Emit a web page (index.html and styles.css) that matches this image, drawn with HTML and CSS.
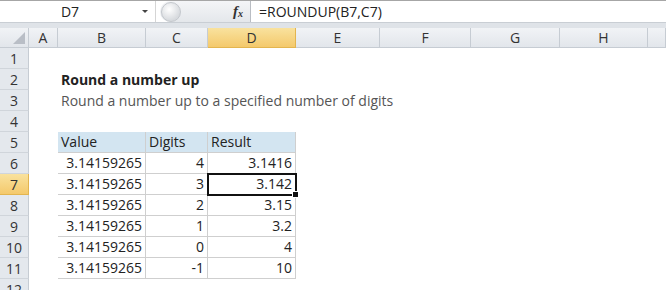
FILE: index.html
```html
<!DOCTYPE html>
<html lang="en">
<head>
    <meta charset="UTF-8">
    <title>ROUNDUP example</title>
    <link rel="stylesheet" href="styles.css">
</head>
<body>
    <div class="formula-bar">
        <div class="name-box">
            <span class="ref">D7</span>
            <span class="arrow"></span>
        </div>
        <div class="fx-area">
            <span class="knob"></span>
            <span class="fx">f<sub>x</sub></span>
        </div>
        <div class="formula">=ROUNDUP(B7,C7)</div>
    </div>
    <div class="band"></div>

    <div class="sheet">
        <div class="corner"><span class="tri"></span></div>
        <div class="col-head">A</div>
        <div class="col-head">B</div>
        <div class="col-head">C</div>
        <div class="col-head active">D</div>
        <div class="col-head">E</div>
        <div class="col-head">F</div>
        <div class="col-head">G</div>
        <div class="col-head">H</div>
        <div class="col-head"></div>

        <div class="row-head">1</div><div class="row-fill"></div>

        <div class="row-head">2</div>
        <div class="cell"></div>
        <div class="cell title span">Round a number up</div>

        <div class="row-head">3</div>
        <div class="cell"></div>
        <div class="cell sub span">Round a number up to a specified number of digits</div>

        <div class="row-head">4</div><div class="row-fill"></div>

        <div class="row-head">5</div>
        <div class="cell"></div>
        <div class="cell t th">Value</div>
        <div class="cell t th">Digits</div>
        <div class="cell t th">Result</div>
        <div class="cell rest"></div>

        <div class="row-head">6</div>
        <div class="cell"></div>
        <div class="cell t num">3.14159265</div>
        <div class="cell t num">4</div>
        <div class="cell t num">3.1416</div>
        <div class="cell rest"></div>

        <div class="row-head active">7</div>
        <div class="cell"></div>
        <div class="cell t num">3.14159265</div>
        <div class="cell t num">3</div>
        <div class="cell t num selected">3.142<span class="handle"></span></div>
        <div class="cell rest"></div>

        <div class="row-head">8</div>
        <div class="cell"></div>
        <div class="cell t num">3.14159265</div>
        <div class="cell t num">2</div>
        <div class="cell t num">3.15</div>
        <div class="cell rest"></div>

        <div class="row-head">9</div>
        <div class="cell"></div>
        <div class="cell t num">3.14159265</div>
        <div class="cell t num">1</div>
        <div class="cell t num">3.2</div>
        <div class="cell rest"></div>

        <div class="row-head">10</div>
        <div class="cell"></div>
        <div class="cell t num">3.14159265</div>
        <div class="cell t num">0</div>
        <div class="cell t num">4</div>
        <div class="cell rest"></div>

        <div class="row-head">11</div>
        <div class="cell"></div>
        <div class="cell t num">3.14159265</div>
        <div class="cell t num">-1</div>
        <div class="cell t num">10</div>
        <div class="cell rest"></div>

        <div class="row-head">12</div><div class="row-fill"></div>
    </div>
</body>
</html>
```

FILE: styles.css
```css
body {
    margin: 0;
    width: 666px;
    height: 290px;
    overflow: hidden;
    background: #fff;
    font-family: 'Open Sans', sans-serif;
    color: #222;
}
.formula-bar {
    display: flex;
    height: 21px;
    border-top: 1px solid #a6a6a6;
    background: #fff;
}
.name-box {
    width: 155px;
    display: flex;
    align-items: center;
    position: relative;
    border-right: 1px solid #d5d5d5;
}
.name-box .ref {
    flex: 1;
    text-align: center;
    font-size: 14px;
    padding-left: 2px;
}
.name-box .arrow {
    width: 0;
    height: 0;
    border-left: 3px solid transparent;
    border-right: 3px solid transparent;
    border-top: 3px solid #444;
    margin-right: 7px;
    margin-left: 4px;
}
.fx-area {
    width: 90px;
    display: flex;
    align-items: center;
    justify-content: space-between;
    background: linear-gradient(#f4f5f7, #e4e7eb);
    border-right: 1px solid #b9bdc3;
    border-radius: 11px 0 0 11px;
    margin-left: 4px;
}
.knob {
    width: 18px;
    height: 18px;
    border-radius: 50%;
    background: radial-gradient(circle at 40% 35%, #fff, #d7dade 70%);
    border: 1px solid #c4c8cd;
    margin-left: 1px;
}
.fx {
    font-family: 'Liberation Serif', serif;
    font-style: italic;
    font-weight: bold;
    font-size: 15px;
    color: #333;
    margin-right: 7px;
}
.fx sub {
    font-size: 10px;
    vertical-align: -1px;
}
.formula {
    flex: 1;
    font-size: 14px;
    line-height: 21px;
    padding-left: 8px;
}
.band {
    height: 5px;
    background: #dfe3e8;
    border-top: 1px solid #c9ced4;
}
.sheet {
    display: grid;
    grid-template-columns: 29px 29px 88px 62px 88px 84px 91px 89px 88px 18px;
    grid-auto-rows: 21px;
    grid-template-rows: 20px;
    font-size: 14px;
}
.corner, .col-head, .row-head {
    background: linear-gradient(#f1f3f6, #e2e6eb);
    color: #333;
    border-right: 1px solid #c6ccd3;
    border-bottom: 1px solid #c6ccd3;
    box-sizing: border-box;
    display: flex;
    align-items: center;
    justify-content: center;
}
.corner {
    position: relative;
}
.corner .tri {
    position: absolute;
    right: 3px;
    bottom: 3px;
    width: 0;
    height: 0;
    border-left: 12px solid transparent;
    border-bottom: 12px solid #b9bec6;
}
.col-head.active, .row-head.active {
    background: linear-gradient(#f9e29e, #f4c96c);
    border-color: #e3b54f;
}
.row-head {
    justify-content: center;
    background: #e4e8ed;
    border-bottom-color: #d0d5db;
}
.row-fill {
    grid-column: 2 / -1;
}
.cell {
    box-sizing: border-box;
    padding: 0 3px;
    line-height: 21px;
    white-space: nowrap;
    position: relative;
}
.span {
    grid-column: 3 / -1;
}
.title {
    font-weight: bold;
}
.sub {
    color: #555;
}
.rest {
    grid-column: 6 / -1;
}
.t {
    border-right: 1px solid #cfcfcf;
    border-bottom: 1px solid #cfcfcf;
}
.sheet > .cell.t:nth-child(n) {
    line-height: 20px;
}
.th {
    background: #d3e5f1;
}
.num {
    text-align: right;
}
.selected {
    outline: 2px solid #111;
    outline-offset: -1px;
    z-index: 1;
}
.handle {
    position: absolute;
    right: -4px;
    bottom: -4px;
    width: 5px;
    height: 5px;
    background: #111;
    border: 1px solid #fff;
}
```
